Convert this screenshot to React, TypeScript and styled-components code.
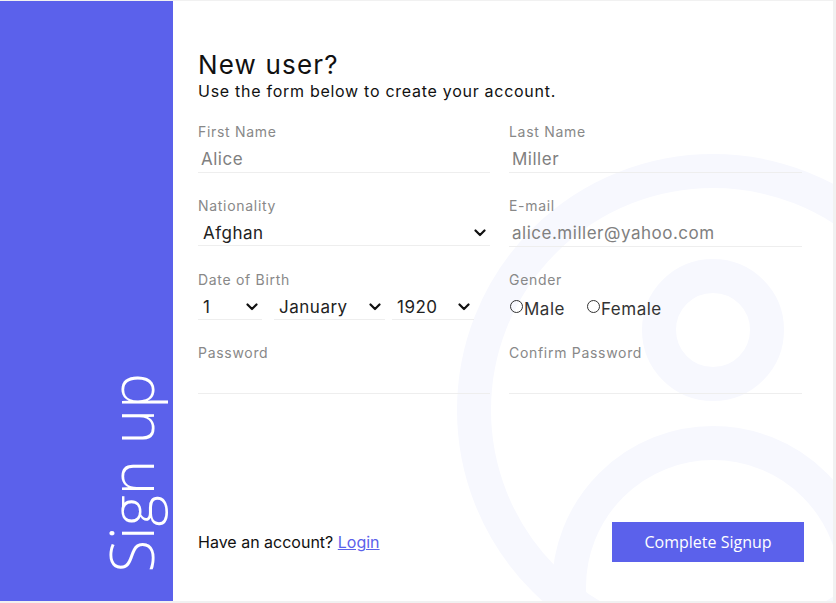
import React from 'react';
import styled, { createGlobalStyle } from 'styled-components';

const GlobalStyle = createGlobalStyle`
  html, body {
    margin: 0;
    padding: 0;
    background: #f1f1f1;
  }
  body {
    font-family: Inter, "Open Sans", sans-serif;
  }
`;

const Chevron = () => (
  <svg width="12" height="8" viewBox="0 0 12 8">
    <path d="M1.5 1.5 L6 6 L10.5 1.5" fill="none" stroke="#111" strokeWidth="2.2" strokeLinecap="round" strokeLinejoin="round" />
  </svg>
);

const Backdrop = () => (
  <BgArt width="836" height="603" viewBox="0 0 836 603">
    <circle cx="713" cy="410" r="239" fill="none" stroke="#f7f8fe" strokeWidth="34" />
    <circle cx="713" cy="330" r="54" fill="none" stroke="#f7f8fe" strokeWidth="34" />
    <circle cx="713" cy="587" r="144" fill="none" stroke="#f7f8fe" strokeWidth="34" />
  </BgArt>
);

type Field = { label: string; value?: string };

const TextField = ({ label, value }: Field) => (
  <FieldBox>
    <Label>{label}</Label>
    <Input>{value}</Input>
  </FieldBox>
);

const App = () => {
  return (
    <>
      <GlobalStyle />
      <Card>
        <Sidebar>
          <Vertical>Sign up</Vertical>
        </Sidebar>
        <Main>
          <Backdrop />
          <Content>
            <Title>New user?</Title>
            <Subtitle>Use the form below to create your account.</Subtitle>
            <Grid>
              <TextField label="First Name" value="Alice" />
              <TextField label="Last Name" value="Miller" />
              <FieldBox>
                <Label>Nationality</Label>
                <Select>
                  <span>Afghan</span>
                  <Chevron />
                </Select>
              </FieldBox>
              <TextField label="E-mail" value="alice.miller@yahoo.com" />
              <FieldBox>
                <Label>Date of Birth</Label>
                <DateRow>
                  <Select $w={64}>
                    <span>1</span>
                    <Chevron />
                  </Select>
                  <Select $w={111}>
                    <span>January</span>
                    <Chevron />
                  </Select>
                  <Select $w={82}>
                    <span>1920</span>
                    <Chevron />
                  </Select>
                </DateRow>
              </FieldBox>
              <FieldBox>
                <Label>Gender</Label>
                <RadioRow>
                  <RadioOpt>
                    <Radio />
                    Male
                  </RadioOpt>
                  <RadioOpt>
                    <Radio />
                    Female
                  </RadioOpt>
                </RadioRow>
              </FieldBox>
              <TextField label="Password" />
              <TextField label="Confirm Password" />
            </Grid>
            <Footer>
              <Account>
                Have an account? <LoginLink href="#">Login</LoginLink>
              </Account>
              <SubmitButton>Complete Signup</SubmitButton>
            </Footer>
          </Content>
        </Main>
      </Card>
    </>
  );
};

export default App;

const Card = styled.div`
  margin-top: 1px;
  width: 833px;
  height: 600px;
  background: #fff;
  display: flex;
  overflow: hidden;
`;

const Sidebar = styled.div`
  width: 173px;
  flex-shrink: 0;
  background: #5b61eb;
  display: flex;
  align-items: flex-end;
  justify-content: flex-end;
  padding: 0 12px 28px 0;
  box-sizing: border-box;
`;

const Vertical = styled.div`
  writing-mode: vertical-rl;
  transform: rotate(180deg);
  color: #fff;
  font-family: "Open Sans", sans-serif;
  font-weight: 300;
  font-size: 60px;
  line-height: 1;
`;

const Main = styled.div`
  position: relative;
  flex: 1;
`;

const BgArt = styled.svg`
  position: absolute;
  left: -173px;
  top: -1px;
  pointer-events: none;
`;

const Content = styled.div`
  position: relative;
  height: 100%;
  box-sizing: border-box;
  padding: 48px 29px 39px 25px;
  display: flex;
  flex-direction: column;
`;

const Title = styled.h1`
  margin: 0;
  font-weight: 400;
  font-size: 26px;
  line-height: 32px;
  letter-spacing: 0.045em;
  color: #111;
`;

const Subtitle = styled.p`
  margin: 0;
  font-size: 16px;
  line-height: 20px;
  letter-spacing: 0.045em;
  color: #111;
`;

const Grid = styled.div`
  margin-top: 22px;
  display: grid;
  grid-template-columns: 292px 293px;
  column-gap: 19px;
  row-gap: 24px;
`;

const FieldBox = styled.div`
  display: flex;
  flex-direction: column;
`;

const Label = styled.div`
  font-size: 14px;
  line-height: 18px;
  letter-spacing: 0.05em;
  color: #888;
`;

const Input = styled.div`
  margin-top: 5px;
  height: 26px;
  padding-left: 3px;
  border-bottom: 1px solid #eee;
  font-size: 17px;
  line-height: 26px;
  letter-spacing: 0.03em;
  color: #808080;
`;

const Select = styled.div<{ $w?: number }>`
  margin-top: 5px;
  height: 26px;
  width: ${p => (p.$w ? `${p.$w}px` : 'auto')};
  box-sizing: border-box;
  padding: 0 4px 0 5px;
  border-bottom: 1px solid #eee;
  display: flex;
  align-items: center;
  justify-content: space-between;
  font-size: 17px;
  letter-spacing: 0.03em;
  color: #222;
`;

const DateRow = styled.div`
  display: flex;
  gap: 12px;
  & > div:last-child {
    margin-left: -5px;
  }
`;

const RadioRow = styled.div`
  margin-top: 5px;
  height: 26px;
  display: flex;
  align-items: center;
  gap: 22px;
  padding-left: 1px;
`;

const RadioOpt = styled.label`
  display: flex;
  align-items: center;
  font-size: 17px;
  letter-spacing: 0.03em;
  color: #333;
  padding-top: 4px;
`;

const Radio = styled.span`
  width: 13px;
  height: 13px;
  border: 1px solid #333;
  border-radius: 50%;
  box-sizing: border-box;
  margin-right: 1px;
  margin-top: -6px;
`;

const Footer = styled.div`
  margin-top: auto;
  display: flex;
  align-items: center;
  justify-content: space-between;
`;

const Account = styled.div`
  font-size: 16px;
  color: #111;
`;

const LoginLink = styled.a`
  color: #5b61eb;
  text-decoration: underline;
`;

const SubmitButton = styled.button`
  width: 192px;
  height: 40px;
  border: none;
  background: #5b61eb;
  color: #fff;
  font-family: "Open Sans", sans-serif;
  font-size: 16px;
  cursor: pointer;
`;
